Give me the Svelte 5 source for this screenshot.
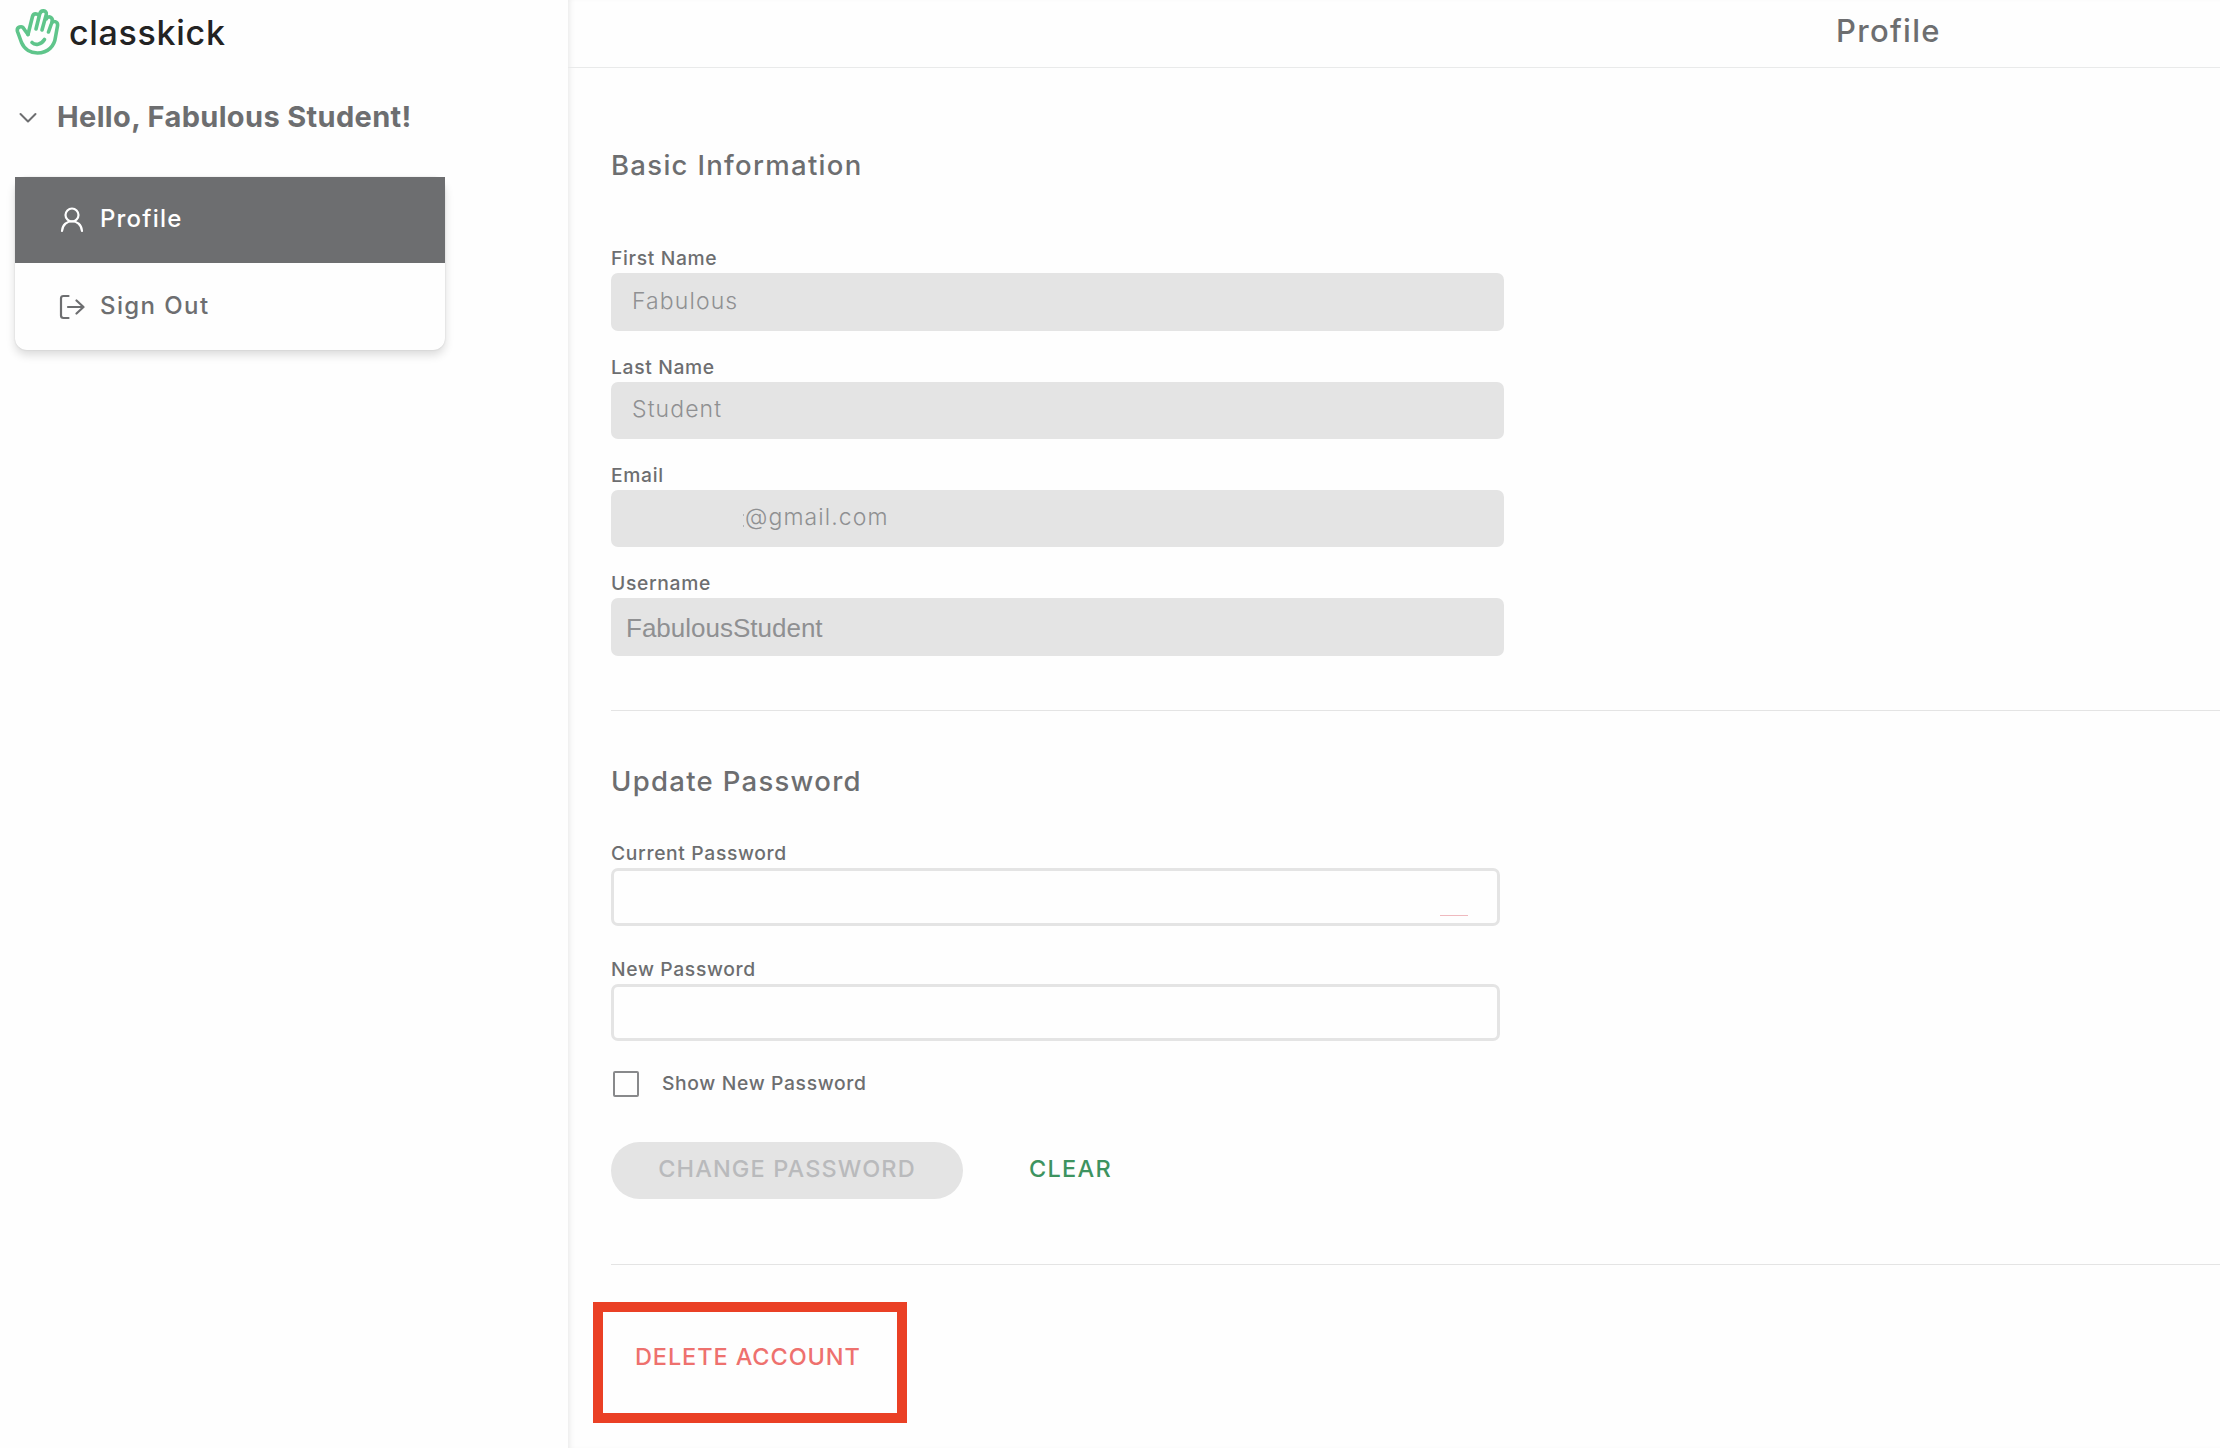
<script lang="ts">
	const fields = [
		{ label: 'First Name', value: 'Fabulous', kind: '' },
		{ label: 'Last Name', value: 'Student', kind: 'raised' },
		{ label: 'Email', value: '@gmail.com', kind: 'masked' },
		{ label: 'Username', value: 'FabulousStudent', kind: 'plain' }
	];

	let menuOpen = $state(true);
	let showPassword = $state(false);
	let currentPassword = $state('');
	let newPassword = $state('');

	const clear = () => {
		currentPassword = '';
		newPassword = '';
	};
</script>

<div class="page">
	<aside class="sidebar">
		<div class="logo">
			<svg class="hand" viewBox="0 0 48 50" fill="none" stroke="#5fc58b" stroke-width="3.6" stroke-linecap="round" stroke-linejoin="round">
				<path d="M13 29.500L9 24C7 20 1.300 22 2.500 26.500L6.500 37.500C9.500 44.500 16 48 22.500 48C33 48 39.500 41 40.500 32L42.500 21C43.300 16 37.600 15 36.300 19L33.500 27" />
				<path d="M13 29.500L17.500 11.500C18.500 7.500 25 8.500 24 12.500M21 24L24.700 9C26 4.500 32 5 31.300 9.500M27 25L31.300 9.500M31.300 14C33 10 38.500 12 37 17" />
				<path d="M17 37.500C20 40.500 26 40 29.500 34.500" />
			</svg>
			<span>classkick</span>
		</div>
		<button class="greeting" onclick={() => (menuOpen = !menuOpen)}>
			<svg class="chevron" viewBox="0 0 18 12" fill="none" stroke="#6d6e70" stroke-width="2" stroke-linecap="round" stroke-linejoin="round">
				<path d="M1.500 2L9 9.500L16.500 2" />
			</svg>
			<span>Hello, Fabulous Student!</span>
		</button>
		{#if menuOpen}
			<nav class="menu">
				<a class="item active" href="#profile">
					<svg viewBox="0 0 26 26" fill="none" stroke="currentColor" stroke-width="2.2" stroke-linecap="round">
						<circle cx="13" cy="8" r="6.500" />
						<path d="M3 24C4 11 22 11 23 24" />
					</svg>
					<span>Profile</span>
				</a>
				<a class="item" href="#signout">
					<svg viewBox="0 0 26 26" fill="none" stroke="currentColor" stroke-width="2.2" stroke-linecap="round" stroke-linejoin="round">
						<path d="M9.500 2H4.500Q2 2 2 4.500V21.500Q2 24 4.500 24H9.500M9 13H24.500M17.500 6.500L24.500 13L17.500 19.500" />
					</svg>
					<span>Sign Out</span>
				</a>
			</nav>
		{/if}
	</aside>

	<main class="main">
		<header class="header"><h1>Profile</h1></header>

		<section class="basic">
			<h2 class="basic-title">Basic Information</h2>
			{#each fields as field}
				<div class="field">
					<span class="label">{field.label}</span>
					<div class="value {field.kind}">{field.value}</div>
				</div>
			{/each}
		</section>

		<section class="password">
			<h2 class="password-title">Update Password</h2>
			<label class="entry">
				<span class="label">Current Password</span>
				<span class="box">
					<input type={showPassword ? 'text' : 'password'} bind:value={currentPassword} />
					<i class="mark"></i>
				</span>
			</label>
			<label class="entry">
				<span class="label">New Password</span>
				<span class="box">
					<input type={showPassword ? 'text' : 'password'} bind:value={newPassword} />
				</span>
			</label>
			<label class="show">
				<input type="checkbox" bind:checked={showPassword} />
				<span class="label">Show New Password</span>
			</label>
			<div class="actions">
				<button class="change" disabled>CHANGE PASSWORD</button>
				<button class="clear" onclick={clear}>CLEAR</button>
			</div>
		</section>

		<section class="danger">
			<div class="highlight">
				<button class="delete">DELETE ACCOUNT</button>
			</div>
		</section>
	</main>
</div>

<style>
	:global(body) {
		margin: 0;
		background: #fefefe;
	}

	.page {
		display: flex;
		height: 100vh;
		font-family: Inter, 'Open Sans', sans-serif;
		font-weight: 550;
		color: #6d6e70;
		overflow: hidden;
	}

	.page * {
		box-sizing: border-box;
	}

	button {
		border: 0;
		padding: 0;
		background: none;
		font: inherit;
		color: inherit;
		white-space: nowrap;
	}

	h1,
	h2 {
		margin: 0;
		font-weight: 550;
		white-space: nowrap;
	}

	.sidebar {
		width: 568px;
		flex: none;
		padding: 5px 0 0 15px;
	}

	.logo {
		display: flex;
		height: 53px;
		color: #232323;
		font-size: 34px;
		line-height: 55px;
		letter-spacing: 0.7px;
	}

	.hand {
		width: 48px;
		height: 50px;
		margin-right: 6px;
	}

	.greeting {
		display: flex;
		align-items: center;
		margin-top: 38px;
		height: 40px;
		font-size: 29px;
		font-weight: 700;
		letter-spacing: 0.35px;
	}

	.chevron {
		width: 18px;
		height: 12px;
		margin: 3px 20px 0 4px;
	}

	.menu {
		margin-top: 41px;
		width: 430px;
		height: 173px;
		border-radius: 12px;
		box-shadow: 0 5px 10px rgba(0, 0, 0, 0.14), 0 0 2px rgba(0, 0, 0, 0.12);
	}

	.item {
		display: flex;
		align-items: center;
		height: 86px;
		padding: 0 0 4px 43px;
		font-size: 24px;
		letter-spacing: 1.2px;
		color: inherit;
		text-decoration: none;
	}

	.item + .item {
		padding-bottom: 2px;
		letter-spacing: 1.4px;
	}

	.item svg {
		width: 26px;
		height: 26px;
		margin: 4px 15px 0 1px;
	}

	.active {
		background: #6d6e70;
		color: #fff;
	}

	.main {
		flex: 1;
		min-width: 0;
		box-shadow: inset 5px 0 6px -4px rgba(0, 0, 0, 0.1);
	}

	.header {
		height: 68px;
		padding-left: 1268px;
		border-bottom: 1px solid #e9eaea;
	}

	h1 {
		font-size: 31px;
		line-height: 61px;
		letter-spacing: 1.3px;
	}

	h2 {
		font-size: 27.5px;
		line-height: 34px;
		letter-spacing: 1.3px;
	}

	.label {
		display: block;
		font-size: 19.3px;
		line-height: 24px;
		letter-spacing: 0.65px;
		white-space: nowrap;
	}

	.basic {
		margin-left: 43px;
		padding-top: 80px;
		height: 643px;
		border-bottom: 1px solid #e4e4e4;
	}

	.basic-title {
		margin-bottom: 64.4px;
	}

	.field {
		height: 108.35px;
	}

	.value {
		position: relative;
		margin-top: 3px;
		padding-left: 21px;
		width: 893px;
		height: 57.4px;
		border-radius: 7px;
		background: #e4e4e4;
		color: #8f9092;
		font-size: 23px;
		font-weight: 300;
		line-height: 56px;
		letter-spacing: 1.1px;
	}

	.raised {
		line-height: 54px;
	}

	.masked {
		padding-left: 134px;
		line-height: 55px;
	}

	/* what is left of the hidden part of the address */
	.masked::before {
		content: '';
		position: absolute;
		left: 132px;
		top: 24px;
		width: 1px;
		height: 9px;
		border: solid #b4b5b6;
		border-width: 2px 0;
	}

	.plain {
		padding-left: 15px;
		font-family: 'Liberation Sans', Arial, sans-serif;
		font-size: 26px;
		font-weight: 400;
		line-height: 61px;
		letter-spacing: 0;
	}

	.password {
		margin-left: 43px;
		padding-top: 53px;
		height: 554px;
		border-bottom: 1px solid #e4e4e4;
	}

	.password-title {
		margin-bottom: 43.2px;
	}

	.entry {
		display: block;
		height: 115.6px;
	}

	.box {
		position: relative;
		display: block;
		margin-top: 3px;
		width: 889px;
		height: 57.6px;
	}

	.box input {
		display: block;
		width: 100%;
		height: 100%;
		padding: 0 16px;
		border: 3px solid #e4e4e4;
		border-radius: 7px;
		background: none;
		outline: 0;
	}

	.mark {
		position: absolute;
		right: 32px;
		bottom: 10px;
		width: 28px;
		height: 1px;
		background: #efb9be;
	}

	.show {
		display: flex;
		align-items: center;
		height: 28px;
		margin-top: -2.4px;
	}

	.show input {
		appearance: none;
		width: 26px;
		height: 26px;
		margin: 0 23px 0 2px;
		border: 2px solid #88898b;
		border-radius: 2px;
	}

	.show .label {
		padding-bottom: 2px;
	}

	.actions {
		display: flex;
		align-items: center;
		margin-top: 44px;
		height: 57px;
		font-size: 23.5px;
		letter-spacing: 1.1px;
	}

	.change {
		width: 352px;
		height: 57px;
		padding-bottom: 3px;
		border-radius: 29px;
		background: #e4e4e4;
		color: #b9babc;
		letter-spacing: inherit;
	}

	.clear {
		margin-left: 66px;
		padding-bottom: 3px;
		color: #3d9360;
		letter-spacing: 1.3px;
	}

	.danger {
		padding: 37px 0 0 25px;
	}

	.highlight {
		width: 314px;
		height: 121px;
		padding: 30px 0 0 32px;
		border: 10px solid #ea4025;
	}

	.delete {
		display: block;
		color: #ee716e;
		font-size: 23.5px;
		letter-spacing: 0.9px;
	}
</style>
